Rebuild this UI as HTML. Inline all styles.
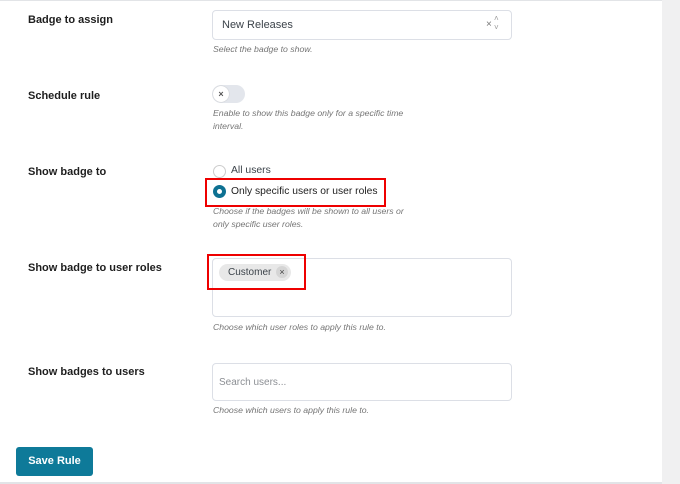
<!DOCTYPE html>
<html><head><style>
body{margin:0;width:680px;height:484px;background:#fff;font-family:"Liberation Sans",sans-serif;position:relative;overflow:hidden}
.a{position:absolute}
.lbl{position:absolute;left:28px;font-size:11px;font-weight:bold;color:#1e1e1e}
.desc{position:absolute;left:213px;font-size:8.7px;font-style:italic;color:#757575;line-height:13px}
.box{position:absolute;left:212px;width:298px;border:1px solid #dcdfe6;border-radius:4px;background:#fff}
</style></head><body>
<div class="a" style="left:662px;top:0;width:18px;height:484px;background:#f0f0f1"></div>
<div class="a" style="left:0;top:0;width:662px;height:1px;background:#e2e4e7"></div>
<div class="a" style="left:0;top:482px;width:662px;height:2px;background:#e2e4e7"></div>

<div class="lbl" style="top:14px">Badge to assign</div>
<div class="box" style="top:10px;height:28px"></div>
<div class="a" style="left:222px;top:19px;font-size:11px;color:#3c434a">New Releases</div>
<div class="a" style="left:486px;top:19px;font-size:10px;color:#777">×</div>
<div class="a" style="left:494px;top:14px;font-size:8px;color:#999;line-height:9px">˄<br>˅</div>
<div class="desc" style="top:43px">Select the badge to show.</div>

<div class="lbl" style="top:90px">Schedule rule</div>
<div class="a" style="left:212px;top:85px;width:33px;height:18px;border-radius:9px;background:#e3e6ec"></div>
<div class="a" style="left:213px;top:86px;width:16px;height:16px;border-radius:8px;background:#fff;box-shadow:0 0 1px #aaa;font-size:9px;color:#555;text-align:center;line-height:16px;font-weight:bold">×</div>
<div class="desc" style="top:107px">Enable to show this badge only for a specific time<br>interval.</div>

<div class="lbl" style="top:166px">Show badge to</div>
<div class="a" style="left:213px;top:165px;width:11px;height:11px;border:1px solid #ccc;border-radius:50%"></div>
<div class="a" style="left:231px;top:165px;font-size:10.4px;color:#3c434a">All users</div>
<div class="a" style="left:205px;top:178px;width:177px;height:25px;border:2px solid #e00"></div>
<div class="a" style="left:213px;top:185px;width:5px;height:5px;border:4px solid #0e7192;border-radius:50%;background:#fff"></div>
<div class="a" style="left:231px;top:186px;font-size:10.3px;color:#1e1e1e">Only specific users or user roles</div>
<div class="desc" style="top:205px">Choose if the badges will be shown to all users or<br>only specific user roles.</div>

<div class="lbl" style="top:262px">Show badge to user roles</div>
<div class="box" style="top:258px;height:57px"></div>
<div class="a" style="left:219px;top:264px;width:72px;height:17px;border-radius:9px;background:#e8e8e8"></div>
<div class="a" style="left:228px;top:267px;font-size:10px;color:#3c434a">Customer</div>
<div class="a" style="left:276px;top:266px;width:12px;height:12px;border-radius:6px;background:#d5d5d5;font-size:9px;text-align:center;line-height:12px;color:#444">×</div>
<div class="a" style="left:207px;top:254px;width:95px;height:32px;border:2px solid #e00"></div>
<div class="desc" style="top:321px">Choose which user roles to apply this rule to.</div>

<div class="lbl" style="top:366px">Show badges to users</div>
<div class="box" style="top:363px;height:36px"></div>
<div class="a" style="left:219px;top:377px;font-size:10px;color:#8c8f94">Search users...</div>
<div class="desc" style="top:404px">Choose which users to apply this rule to.</div>

<div class="a" style="left:16px;top:447px;width:77px;height:29px;background:#0e7a99;border-radius:3px;color:#fff;font-size:11px;font-weight:bold;text-align:center;line-height:29px">Save Rule</div>
</body></html>
